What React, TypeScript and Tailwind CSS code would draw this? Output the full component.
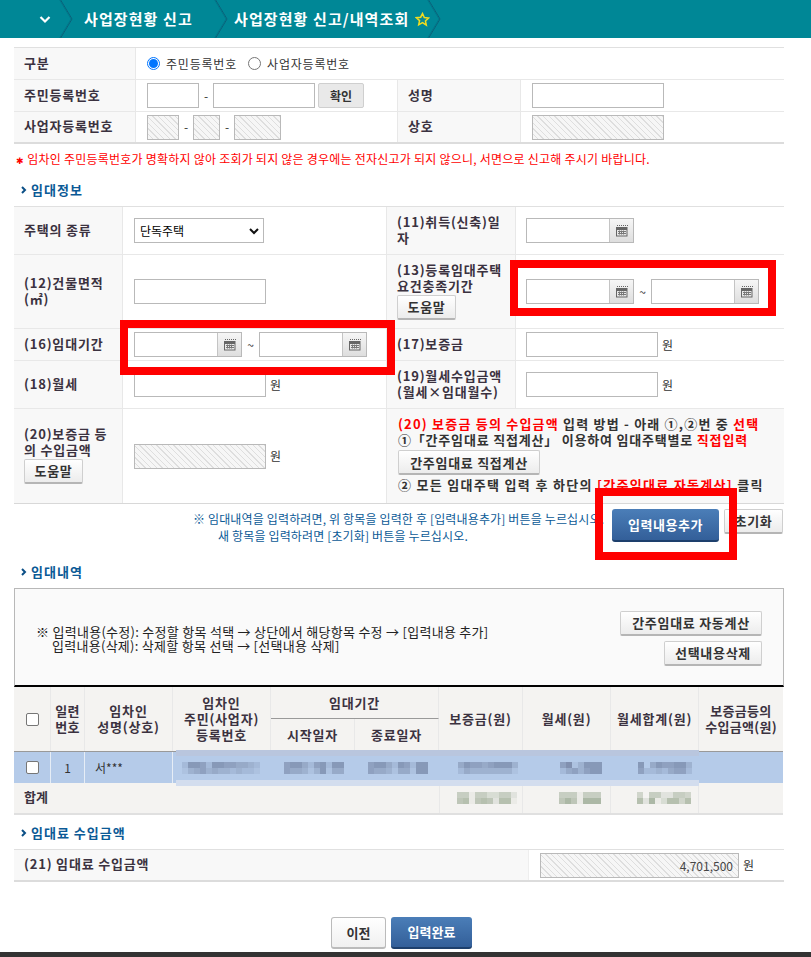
import React from "react";

const font = "[font-family:'Noto_Sans_CJK_KR','Noto_Sans',sans-serif]";
const hatch =
  "bg-[repeating-linear-gradient(45deg,#f6f6f6_0px,#f6f6f6_3px,#dedede_3px,#dedede_4px)]";
const labelCls =
  "flex items-center bg-[#f8f8f8] pb-[2px] text-[13px] font-bold text-[#3b3240] tracking-[0.8px] leading-[16px]";

function Input({ w, disabled, children }: { w: number; disabled?: boolean; children?: React.ReactNode }) {
  return (
    <div
      className={`h-[25px] shrink-0 border border-[#b9b9b9] ${disabled ? hatch : "bg-white"}`}
      style={{ width: w }}
    >
      {children}
    </div>
  );
}

function GrayBtn({ children, cls = "" }: { children: React.ReactNode; cls?: string }) {
  return (
    <div
      className={`inline-flex h-[25px] shrink-0 items-center justify-center rounded-[2px] border border-[#cfcfcf] border-b-2 border-b-[#b5b5b5] bg-gradient-to-b from-white to-[#ececec] text-[13px] font-bold text-[#333] tracking-[0.7px] ${cls}`}
    >
      {children}
    </div>
  );
}

function CalIcon() {
  return (
    <svg width="12" height="12" viewBox="0 0 12 12" className="block">
      <path d="M1 0h1v1H1zM3 0h1v1H3zM5 0h1v1H5zM7 0h1v1H7zM9 0h1v1H9zM11 0h1v1h-1z" fill="#666" />
      <rect x="0.5" y="2.5" width="10.5" height="8.5" fill="#e8e8e8" stroke="#666" />
      <rect x="1" y="3" width="10" height="2" fill="#666" />
      <path d="M2 6.5h8M2 8.5h8M3.5 5.5v4M5.5 5.5v4M7.5 5.5v4" stroke="#777" strokeWidth="1" />
    </svg>
  );
}

function DateInput() {
  return (
    <div className="flex h-[25px] w-[108px] shrink-0 border border-[#b9b9b9] bg-white">
      <div className="flex-1" />
      <div className="flex w-[24px] items-center justify-center border-l border-[#c4c4c4] bg-gradient-to-b from-[#f6f6f6] to-[#dedede]">
        <CalIcon />
      </div>
    </div>
  );
}

function Tilde() {
  return <span className="w-[17px] shrink-0 text-center text-[12px] text-[#333]">~</span>;
}

function Dash() {
  return <span className="w-[14px] shrink-0 text-center text-[12px] text-[#333]">-</span>;
}

function SectionTitle({ children, cls }: { children: React.ReactNode; cls: string }) {
  return (
    <div className={`flex items-center gap-[4px] pl-[21px] text-[13px] font-bold text-[#0b5a96] tracking-[1px] ${cls}`}>
      <svg width="6" height="8" viewBox="0 0 6 8">
        <path d="M1 1l3 3-3 3" fill="none" stroke="#0b4f86" strokeWidth="2" />
      </svg>
      {children}
    </div>
  );
}

function Crumb({ children, cls = "" }: { children: React.ReactNode; cls?: string }) {
  return (
    <div className={`relative flex h-full items-center whitespace-nowrap ${cls}`}>
      {children}
      <svg width="14" height="38" viewBox="0 0 14 38" className="absolute right-0 top-0">
        <path d="M1 -1L13 19L1 39" fill="none" stroke="#0c5f78" strokeWidth="1" />
        <path d="M0 -1L12 19L0 39" fill="none" stroke="#00788a" strokeWidth="1" />
      </svg>
    </div>
  );
}

function Mosaic({ data, color, size = 6 }: { data: string; color: string; size?: number }) {
  const rows = data.split("|");
  return (
    <svg width={rows[0].length * size} height={rows.length * size} className="block">
      {rows.map((r, y) =>
        r.split("").map((c, x) =>
          c === "." ? null : (
            <rect key={`${x}-${y}`} x={x * size} y={y * size} width={size} height={size} fill={color} opacity={Number(c) / 9} />
          )
        )
      )}
    </svg>
  );
}

const Row2 = ({ children, h, cols = "grid-cols-[109px_264px_129px_1fr]", line = "border-b border-[#e8e8e8]" }: { children: React.ReactNode; h: number; cols?: string; line?: string }) => (
  <div className={`grid ${cols} ${line}`} style={{ height: h }}>
    {children}
  </div>
);

const listCols = "grid-cols-[37px_34px_88px_98px_84px_84px_84px_88px_88px_84px]";
const blue = "#71809f";
const green = "#a3b09c";

export default function App() {
  const cellL = `${labelCls} border-r border-[#e8e8e8] pl-[10px] pr-[2px]`;
  const cellV = "flex items-center gap-[4px] border-r border-[#e8e8e8] pl-[11px] bg-white";
  const th = "flex items-center justify-center border-r border-[#e8e8e8] text-center text-[13px] font-bold text-[#3b3240] tracking-[0.8px] leading-[16px] whitespace-nowrap";
  const won = <span className="text-[12px] text-[#333]">원</span>;
  const stack = `${labelCls} flex-col !items-start justify-center border-r border-[#e8e8e8] pl-[10px] pr-[2px]`;
  return (
    <div className={`relative h-[957px] w-[811px] overflow-hidden bg-white ${font}`}>
      {/* breadcrumb */}
      <div className="flex h-[38px] items-center bg-[#008796] text-[15px] font-bold text-white tracking-[1.1px]">
        <Crumb cls="w-[73px] justify-start pl-[39px]">
          <svg width="12" height="12" viewBox="0 0 12 12">
            <path d="M1.5 4L6 8.5L10.5 4" fill="none" stroke="#fff" strokeWidth="2.2" />
          </svg>
        </Crumb>
        <Crumb cls="w-[155px] pl-[11px]">사업장현황 신고</Crumb>
        <Crumb cls="w-[213px] pl-[6px]">
          사업장현황 신고/내역조회
          <svg width="15" height="15" viewBox="0 0 24 24" className="ml-[6px]">
            <path d="M12 2.5l2.9 6.3 6.9.8-5.1 4.7 1.4 6.8L12 17.1l-6.1 3.5 1.4-6.8-5.1-4.7 6.9-.8z" fill="#0b8a92" stroke="#f2dc1e" strokeWidth="2.4" />
          </svg>
        </Crumb>
      </div>

      {/* top table */}
      <div className="mx-[14px] mt-[9px] w-[770px] border-t border-[#e0e0e0] border-b-2 border-b-[#dcdcdc]">
        <div className="grid h-[32px] grid-cols-[122px_1fr] border-b border-[#e8e8e8]">
          <div className={cellL}>구분</div>
          <div className="flex items-center pl-[11px] text-[12px] text-[#333] tracking-[0.8px]">
            <span className="flex h-[13px] w-[13px] items-center justify-center rounded-full border border-[#0075ff]">
              <span className="h-[9px] w-[9px] rounded-full bg-[#0075ff]" />
            </span>
            <span className="ml-[6px]">주민등록번호</span>
            <span className="ml-[11px] h-[13px] w-[13px] rounded-full border border-[#767676]" />
            <span className="ml-[6px]">사업자등록번호</span>
          </div>
        </div>
        <div className="grid h-[32px] grid-cols-[122px_262px_123px_1fr] border-b border-[#e8e8e8]">
          <div className={cellL}>주민등록번호</div>
          <div className="flex items-center border-r border-[#e8e8e8] pl-[11px]">
            <Input w={52} />
            <Dash />
            <Input w={102} />
            <div className="ml-[3px] flex h-[25px] w-[46px] items-center justify-center rounded-[2px] border border-[#cfcfcf] bg-[#e9e9e9] text-[12px] font-bold text-[#333]">확인</div>
          </div>
          <div className={cellL}>성명</div>
          <div className="flex items-center pl-[11px]"><Input w={132} /></div>
        </div>
        <div className="grid h-[30px] grid-cols-[122px_262px_123px_1fr]">
          <div className={cellL}>사업자등록번호</div>
          <div className="flex items-center border-r border-[#e8e8e8] pl-[11px]">
            <Input w={32} disabled />
            <Dash />
            <Input w={27} disabled />
            <Dash />
            <Input w={47} disabled />
          </div>
          <div className={cellL}>상호</div>
          <div className="flex items-center pl-[11px]"><Input w={132} disabled /></div>
        </div>
      </div>

      <div className="mt-[6px] h-[17px] whitespace-nowrap pl-[16px] text-[12px] leading-[17px] tracking-[0.23px] text-[#ff0000]">
        <span className="text-[9px]">✱</span> 임차인 주민등록번호가 명확하지 않아 조회가 되지 않은 경우에는 전자신고가 되지 않으니, 서면으로 신고해 주시기 바랍니다.
      </div>

      <SectionTitle cls="mt-[14px] h-[18px]">임대정보</SectionTitle>

      {/* rental info */}
      <div className="ml-[14px] mt-[7px] w-[770px] border-t border-[#e0e0e0] border-b border-b-[#d8d8d8]">
        <Row2 h={48}>
          <div className={cellL}>주택의 종류</div>
          <div className={cellV}>
            <div className="flex h-[25px] w-[130px] items-center justify-between border border-[#b9b9b9] bg-white pl-[5px] pr-[3px] text-[12px] text-black">
              단독주택
              <svg width="12" height="12" viewBox="0 0 12 12"><path d="M2 4l4 4 4-4" fill="none" stroke="#111" strokeWidth="2" /></svg>
            </div>
          </div>
          <div className={cellL}><div className="whitespace-nowrap">(11)취득(신축)일<br />자</div></div>
          <div className="flex items-center pl-[10px]"><DateInput /></div>
        </Row2>
        <Row2 h={74}>
          <div className={cellL}><div className="whitespace-nowrap">(12)건물면적<br />(㎡)</div></div>
          <div className={cellV}><Input w={132} /></div>
          <div className={stack}>
            <div className="whitespace-nowrap">(13)등록임대주택<br />요건충족기간</div>
            <GrayBtn cls="mt-[1px] w-[59px]">도움말</GrayBtn>
          </div>
          <div className="flex items-center pl-[10px]"><DateInput /><Tilde /><DateInput /></div>
        </Row2>
        <Row2 h={32}>
          <div className={cellL}>(16)임대기간</div>
          <div className={`${cellV} !gap-0`}><DateInput /><Tilde /><DateInput /></div>
          <div className={cellL}>(17)보증금</div>
          <div className="flex items-center gap-[4px] pl-[10px]"><Input w={132} />{won}</div>
        </Row2>
        <Row2 h={48}>
          <div className={cellL}>(18)월세</div>
          <div className={cellV}><Input w={132} />{won}</div>
          <div className={cellL}><div className="whitespace-nowrap">(19)월세수입금액<br />(월세×임대월수)</div></div>
          <div className="flex items-center gap-[4px] pl-[10px]"><Input w={132} />{won}</div>
        </Row2>
        <Row2 h={94} cols="grid-cols-[109px_264px_1fr]" line="">
          <div className={stack}>
            <div className="whitespace-nowrap">(20)보증금 등<br />의 수입금액</div>
            <GrayBtn cls="mt-[1px] w-[59px]">도움말</GrayBtn>
          </div>
          <div className={cellV}><Input w={132} disabled />{won}</div>
          <div className="flex flex-col bg-[#f8f8f8] pl-[11px] pt-[7px] text-[13px] font-bold leading-[15px] text-[#333] whitespace-nowrap">
            <div className="tracking-[1.2px]">
              <span className="text-[#ff0000]">(20) 보증금 등의 수입금액</span> 입력 방법 - 아래 ①,②번 중 <span className="text-[#ff0000]">선택</span>
            </div>
            <div className="mt-[1px] tracking-[0.8px]">
              ①「간주임대료 직접계산」 이용하여 임대주택별로 <span className="text-[#ff0000]">직접입력</span>
            </div>
            <GrayBtn cls="mt-[3px] w-[142px]">간주임대료 직접계산</GrayBtn>
            <div className="mt-[2px] tracking-[1.3px]">
              ② 모든 임대주택 입력 후 하단의 <span className="text-[#ff0000]">[간주임대료 자동계산]</span> 클릭
            </div>
          </div>
        </Row2>
      </div>

      {/* instruction row */}
      <div className="relative ml-[14px] h-[46px] w-[770px]">
        <div className="pt-[6px] text-[12px] leading-[17px] tracking-[0.15px] text-[#0b5a96] whitespace-nowrap">
          <div className="pl-[179px]">※ 임대내역을 입력하려면, 위 항목을 입력한 후 [입력내용추가] 버튼을 누르십시오.</div>
          <div className="pl-[204px]">새 항목을 입력하려면 [초기화] 버튼을 누르십시오.</div>
        </div>
        <div className="absolute left-[598px] top-[5px] flex h-[33px] w-[107px] items-center justify-center rounded-[3px] border-b-2 border-b-[#1d3f6c] bg-gradient-to-b from-[#4b7eb8] to-[#335f99] text-[13px] font-bold text-white tracking-[0.5px]">
          입력내용추가
        </div>
        <GrayBtn cls="absolute left-[710px] top-[5px] w-[59px]">초기화</GrayBtn>
      </div>

      <SectionTitle cls="mt-[13px] h-[18px]">임대내역</SectionTitle>

      {/* info box */}
      <div className="ml-[14px] mt-[7px] flex h-[99px] w-[770px] items-center justify-between border border-b-2 border-[#b8b8b8] border-b-black bg-[#fafafa] pl-[21px] pr-[21px]">
        <div className="pt-[4px] text-[13px] leading-[14px] tracking-[0.28px] text-[#222] whitespace-nowrap">
          <div>※ 입력내용(수정): 수정할 항목 석택 → 상단에서 해당항목 수정 → [입력내용 추가]</div>
          <div className="pl-[16px]">입력내용(삭제): 삭제할 항목 선택 → [선택내용 삭제]</div>
        </div>
        <div className="mt-[3px] flex flex-col items-end gap-[5px]">
          <GrayBtn cls="w-[142px]">간주임대료 자동계산</GrayBtn>
          <GrayBtn cls="w-[98px]">선택내용삭제</GrayBtn>
        </div>
      </div>

      {/* list table */}
      <div className="relative ml-[14px] w-[769px]">
        <div className={`grid h-[65px] ${listCols} grid-rows-[32px_32px] border-b border-[#999] bg-[#f4f3f1]`}>
          <div className={`${th} row-span-2`}><span className="h-[13px] w-[13px] rounded-[2px] border border-[#767676] bg-white" /></div>
          <div className={`${th} row-span-2 !tracking-[0.3px]`}>일련<br />번호</div>
          <div className={`${th} row-span-2`}>임차인<br />성명(상호)</div>
          <div className={`${th} row-span-2`}>임차인<br />주민(사업자)<br />등록번호</div>
          <div className={`${th} col-span-2 border-b border-b-[#999]`}>임대기간</div>
          <div className={`${th} row-span-2`}>보증금(원)</div>
          <div className={`${th} row-span-2`}>월세(원)</div>
          <div className={`${th} row-span-2`}>월세합계(원)</div>
          <div className={`${th} row-span-2 !border-r-0 !tracking-[0.3px]`}>보증금등의<br />수입금액(원)</div>
          <div className={th}>시작일자</div>
          <div className={th}>종료일자</div>
        </div>
        <div className={`grid h-[31px] ${listCols} bg-[#b5cbe9] text-[12px] text-[#333]`}>
          <div className="flex items-center justify-center border-r border-[#e6edf6]"><span className="h-[13px] w-[13px] rounded-[2px] border border-[#767676] bg-white" /></div>
          <div className="flex items-center justify-center border-r border-[#e6edf6]">1</div>
          <div className="flex items-center border-r border-[#e6edf6] pl-[10px]">서***</div>
          <div className="flex items-center pl-[9px]"><Mosaic color={blue} data="2665266554432|1345343323221" /></div>
          <div className="flex items-center pl-[13px]"><Mosaic color={blue} data="5664256266|5443136144" /></div>
          <div className="flex items-center pl-[13px]"><Mosaic color={blue} data="5664265266|5443144166" /></div>
          <div className="flex items-center justify-end pr-[5px]"><Mosaic color={blue} data="4655456663|2433333331" /></div>
          <div className="flex items-center justify-end pr-[9px]"><Mosaic color={blue} data="5713666|2453566" /></div>
          <div className="flex items-center justify-end pr-[7px]"><Mosaic color={blue} data="6.4655663|522324552" /></div>
          <div />
        </div>
        <div className={`grid h-[32px] ${listCols} border-b-2 border-[#e0e0e0] bg-[#f4f3f1] text-[13px] font-bold text-[#3b3240]`}>
          <div className="col-span-6 flex items-center pl-[10px] pb-[3px]">합계</div>
          <div className="flex items-center justify-end border-l border-r border-[#e8e8e8] pr-[5px]"><Mosaic color={green} data="5515533552|6716762771" /></div>
          <div className="flex items-center justify-end border-r border-[#e8e8e8] pr-[9px]"><Mosaic color={green} data="5551555|6861888" /></div>
          <div className="flex items-center justify-end border-r border-[#e8e8e8] pr-[7px]"><Mosaic color={green} data="4.5522554|728137747" /></div>
          <div />
        </div>
        <div className="pointer-events-none absolute left-[162px] right-[84px] top-[63px] h-[6px] bg-[#b9c6de]" />
        <div className="pointer-events-none absolute left-[162px] right-[84px] top-[93px] h-[6px] bg-[#d3ddee]" />
      </div>

      <SectionTitle cls="mt-[9px] h-[18px]">임대료 수입금액</SectionTitle>

      <div className="ml-[14px] mt-[7px] grid h-[33px] w-[770px] grid-cols-[515px_1fr] border-t border-[#e0e0e0] border-b-2 border-b-[#dcdcdc]">
        <div className={`${labelCls} border-r border-[#eee] pl-[10px]`}>(21) 임대료 수입금액</div>
        <div className="flex items-center pl-[11px]">
          <Input w={199} disabled>
            <div className="pr-[5px] text-right text-[12px] leading-[23px] text-[#444]">4,701,500</div>
          </Input>
          <span className="ml-[4px] text-[12px] text-[#333]">원</span>
        </div>
      </div>

      {/* bottom buttons */}
      <div className="mt-[35px] flex justify-center gap-[5px] pr-[8px]">
        <div className="flex h-[32px] w-[55px] items-center justify-center rounded-[3px] border border-[#bbb] border-b-2 bg-gradient-to-b from-white to-[#f0f0f0] text-[13px] font-bold text-[#333]">이전</div>
        <div className="flex h-[32px] w-[81px] items-center justify-center rounded-[3px] border-b-2 border-b-[#1d3f6c] bg-gradient-to-b from-[#4b7eb8] to-[#335f99] text-[13px] font-bold text-white">입력완료</div>
      </div>

      <div className="absolute bottom-0 left-0 h-[5px] w-full bg-[#333]" />

      {/* annotation frames */}
      <div className="pointer-events-none absolute left-[510px] top-[260px] h-[56px] w-[266px] border-[8px] border-[#ff0000]" />
      <div className="pointer-events-none absolute left-[120px] top-[320px] h-[55px] w-[275px] border-[8px] border-[#ff0000]" />
      <div className="pointer-events-none absolute left-[595px] top-[488px] h-[72px] w-[142px] border-[8px] border-[#ff0000]" />
    </div>
  );
}
